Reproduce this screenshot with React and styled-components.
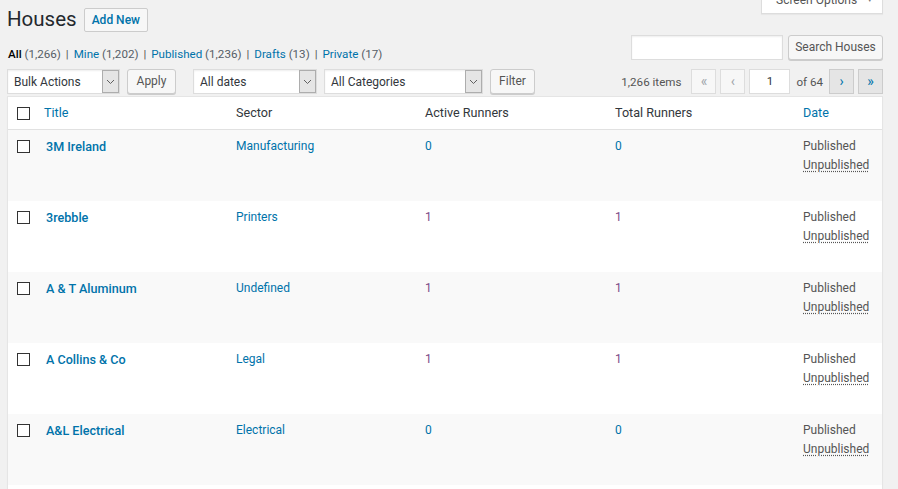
import React from "react";
import styled, { createGlobalStyle } from "styled-components";

const GlobalStyle = createGlobalStyle`
  html, body { margin: 0; padding: 0; background: #f1f1f1; }
  body {
    font-family: "Segoe UI", Roboto, "Liberation Sans", sans-serif;
    font-size: 12px;
    color: #444;
  }
`;

const houses = [
  { title: "3M Ireland", sector: "Manufacturing", active: 0, total: 0 },
  { title: "3rebble", sector: "Printers", active: 1, total: 1 },
  { title: "A & T Aluminum", sector: "Undefined", active: 1, total: 1 },
  { title: "A Collins & Co", sector: "Legal", active: 1, total: 1 },
  { title: "A&L Electrical", sector: "Electrical", active: 0, total: 0 },
];

const App = () => {
  return (
    <>
      <GlobalStyle />
      <Wrap>
        <HeaderRow>
          <PageTitle>Houses</PageTitle>
          <AddNew>Add New</AddNew>
          <ScreenOptions>
            Screen Options <Arrow>▼</Arrow>
          </ScreenOptions>
        </HeaderRow>

        <FilterRow>
          <SubSub>
            <Current>All</Current> <Count>(1,266)</Count>
            <Sep>|</Sep>
            <Link>Mine</Link> <Count>(1,202)</Count>
            <Sep>|</Sep>
            <Link>Published</Link> <Count>(1,236)</Count>
            <Sep>|</Sep>
            <Link>Drafts</Link> <Count>(13)</Count>
            <Sep>|</Sep>
            <Link>Private</Link> <Count>(17)</Count>
          </SubSub>
          <SearchBox>
            <SearchInput />
            <Button $w={95}>Search Houses</Button>
          </SearchBox>
        </FilterRow>

        <TableNav>
          <NavGroup>
            <FakeSelect $w={113}>
              Bulk Actions
              <Caret><Chevron /></Caret>
            </FakeSelect>
            <Button $w={49}>Apply</Button>
          </NavGroup>
          <NavGroup>
            <FakeSelect $w={124}>
              All dates
              <Caret><Chevron /></Caret>
            </FakeSelect>
            <FakeSelect $w={159}>
              All Categories
              <Caret><Chevron /></Caret>
            </FakeSelect>
            <Button $w={45}>Filter</Button>
          </NavGroup>
          <Pagination>
            <Items>1,266 items</Items>
            <PageBtn $disabled>«</PageBtn>
            <PageBtn $disabled>‹</PageBtn>
            <PageInput>1</PageInput>
            <OfText>of 64</OfText>
            <PageBtn>›</PageBtn>
            <PageBtn>»</PageBtn>
          </Pagination>
        </TableNav>

        <Table>
          <colgroup>
            <Col $w={28} />
            <Col $w={190} />
            <Col $w={189} />
            <Col $w={190} />
            <Col $w={188} />
            <Col $w={89} />
          </colgroup>
          <thead>
            <tr>
              <HeadCheck><Box /></HeadCheck>
              <Th $pl={8}><Link>Title</Link></Th>
              <Th>Sector</Th>
              <Th>Active Runners</Th>
              <Th>Total Runners</Th>
              <Th><Link>Date</Link></Th>
            </tr>
          </thead>
          <tbody>
            {houses.map((h, i) => (
              <Row key={h.title} $alt={i % 2 === 0}>
                <CheckCell><Box /></CheckCell>
                <Td><RowTitle>{h.title}</RowTitle></Td>
                <Td><Link>{h.sector}</Link></Td>
                <Td><Num $visited={h.active > 0}>{h.active}</Num></Td>
                <Td><Num $visited={h.total > 0}>{h.total}</Num></Td>
                <Td>
                  <Status>Published</Status>
                  <br />
                  <Abbr>Unpublished</Abbr>
                </Td>
              </Row>
            ))}
            <Row $alt={false} />
          </tbody>
        </Table>
      </Wrap>
    </>
  );
};

export default App;

const Chevron = () => (
  <svg width="9" height="6" viewBox="0 0 9 6">
    <path d="M1 1l3.5 3.5L8 1" fill="none" stroke="#606060" strokeWidth="1" />
  </svg>
);

const Wrap = styled.div`
  padding: 0 15px 0 7px;
  width: 876px;
`;

const HeaderRow = styled.div`
  display: flex;
  align-items: flex-start;
  height: 35px;
`;

const PageTitle = styled.h1`
  margin: 5px 0 0 0;
  font-size: 20.5px;
  font-weight: 400;
  line-height: 29px;
  color: #23282d;
`;

const AddNew = styled.a`
  margin: 8px 0 0 7px;
  height: 24px;
  box-sizing: border-box;
  padding: 0 7px;
  border: 1px solid #ccc;
  border-radius: 2px;
  background: #f7f7f7;
  color: #0073aa;
  font-size: 12px;
  font-weight: 500;
  line-height: 22px;
`;

const ScreenOptions = styled.div`
  margin-left: auto;
  margin-top: -13px;
  width: 122px;
  height: 27px;
  box-sizing: border-box;
  background: #fff;
  border: 1px solid #ddd;
  border-top: none;
  box-shadow: 0 1px 1px rgba(0, 0, 0, 0.04);
  color: #555;
  font-size: 12px;
  line-height: 26px;
  padding-left: 14px;
`;

const Arrow = styled.span`
  font-size: 7px;
  margin-left: 6px;
  vertical-align: 2px;
  color: #777;
`;

const FilterRow = styled.div`
  display: flex;
  justify-content: space-between;
  align-items: flex-start;
`;

const SubSub = styled.div`
  margin-top: 10px;
  padding-left: 1px;
  line-height: 18px;
  font-size: 11.6px;
  color: #555d66;
`;

const Current = styled.span`
  color: #000;
  font-weight: 500;
`;

const Count = styled.span`
  color: #555d66;
`;

const Sep = styled.span`
  color: #555;
  margin: 0 5px;
`;

const Link = styled.a`
  color: #0073aa;
`;

const SearchBox = styled.div`
  display: flex;
  gap: 5px;
`;

const SearchInput = styled.div`
  width: 152px;
  height: 25px;
  box-sizing: border-box;
  background: #fff;
  border: 1px solid #ddd;
  box-shadow: inset 0 1px 2px rgba(0, 0, 0, 0.07);
`;

const Button = styled.div`
  width: ${(p) => p.$w}px;
  height: 25px;
  box-sizing: border-box;
  background: #f7f7f7;
  border: 1px solid #ccc;
  border-radius: 3px;
  box-shadow: 0 1px 0 #ccc;
  color: #555;
  font-size: 12px;
  line-height: 23px;
  text-align: center;
`;

const TableNav = styled.div`
  display: flex;
  align-items: center;
  height: 25px;
  margin-top: 6px;
  gap: 17px;
`;

const NavGroup = styled.div`
  display: flex;
  gap: 7px;
`;

const FakeSelect = styled.div`
  width: ${(p) => p.$w}px;
  height: 25px;
  box-sizing: border-box;
  display: flex;
  align-items: center;
  padding-left: 6px;
  background: #fff;
  border: 1px solid #ddd;
  box-shadow: inset 0 1px 2px rgba(0, 0, 0, 0.07);
  color: #32373c;
  font-size: 12px;
`;

const Caret = styled.span`
  margin-left: auto;
  width: 17px;
  height: 23px;
  box-sizing: border-box;
  display: flex;
  align-items: center;
  justify-content: center;
  background: #e5e5e5;
  border: 1px solid #adadad;
`;

const Pagination = styled.div`
  margin-left: auto;
  display: flex;
  align-items: center;
  gap: 4px;
  color: #555;
  font-size: 11.6px;
`;

const Items = styled.span`
  margin-right: 6px;
`;

const PageBtn = styled.div`
  width: 25px;
  height: 25px;
  box-sizing: border-box;
  display: flex;
  align-items: center;
  justify-content: center;
  font-size: 14px;
  line-height: 1;
  padding-bottom: 2px;
  border: 1px solid ${(p) => (p.$disabled ? "#ddd" : "#ccc")};
  background: ${(p) => (p.$disabled ? "#f7f7f7" : "#e5e5e5")};
  color: ${(p) => (p.$disabled ? "#a0a5aa" : "#0073aa")};
`;

const PageInput = styled.div`
  width: 41px;
  height: 25px;
  box-sizing: border-box;
  background: #fff;
  border: 1px solid #ddd;
  text-align: center;
  line-height: 23px;
  color: #32373c;
`;

const OfText = styled.span`
  margin: 0 2px;
`;

const Table = styled.table`
  margin-top: 2px;
  width: 876px;
  table-layout: fixed;
  border-collapse: separate;
  border-spacing: 0;
  background: #fff;
  border: 1px solid #e5e5e5;
  box-shadow: 0 1px 1px rgba(0, 0, 0, 0.04);
`;

const Col = styled.col`
  width: ${(p) => p.$w}px;
`;

const Th = styled.th`
  padding: 6px 10px 6px ${(p) => p.$pl || 10}px;
  line-height: 20px;
  text-align: left;
  font-weight: 400;
  font-size: 12.6px;
  color: #32373c;
  border-bottom: 1px solid #e1e1e1;
  white-space: nowrap;
`;

const HeadCheck = styled.th`
  padding: 0 0 0 9px;
  border-bottom: 1px solid #e1e1e1;
  vertical-align: middle;
  text-align: left;
`;

const Box = styled.span`
  display: block;
  width: 13px;
  height: 13px;
  box-sizing: border-box;
  border: 1px solid #333;
  background: #fff;
`;

const Row = styled.tr`
  height: 71px;
  background: ${(p) => (p.$alt ? "#f9f9f9" : "#fff")};
`;

const CheckCell = styled.td`
  padding: 10px 0 0 9px;
  vertical-align: top;
`;

const Td = styled.td`
  padding: 7px 10px 0;
  vertical-align: top;
  line-height: 19px;
  font-size: 12px;
  color: #555;
  white-space: nowrap;
`;

const RowTitle = styled.a`
  color: #0073aa;
  font-weight: 500;
  font-size: 12.6px;
`;

const Num = styled.a`
  color: ${(p) => (p.$visited ? "#7c4a87" : "#0073aa")};
`;

const Status = styled.span`
  color: #555;
`;

const Abbr = styled.abbr`
  color: #555;
  text-decoration: underline dotted;
  text-underline-offset: 2px;
`;
